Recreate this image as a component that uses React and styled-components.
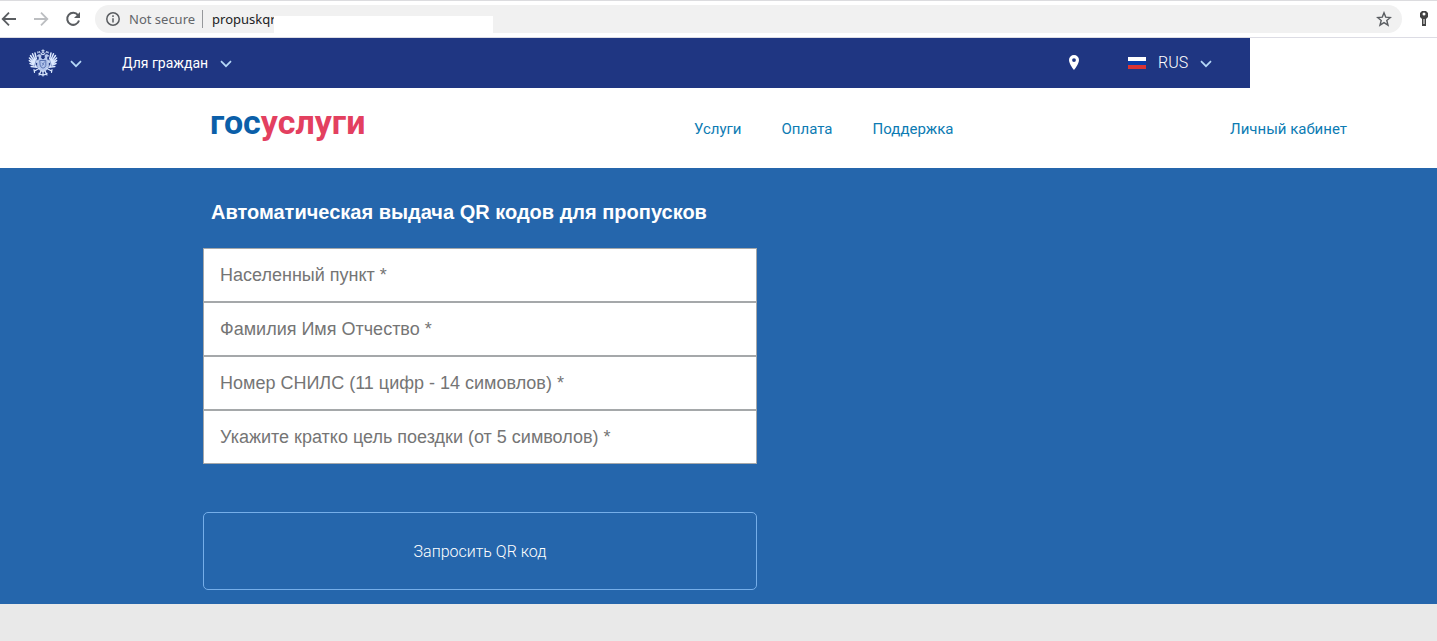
import React from "react";
import styled, { createGlobalStyle } from "styled-components";

const GlobalStyle = createGlobalStyle`
  *, *::before, *::after { box-sizing: border-box; }
  html { background: #e9e9e9; }
  body { margin: 0; font-family: "Liberation Sans", Arial, sans-serif; font-size: 16px; }
  a { color: inherit; text-decoration: none; }
  button, input { font: inherit; }
  button { margin: 0; padding: 0; border: 0; background: none; color: inherit; cursor: pointer; }
  svg { display: block; flex: none; }
`;

const BrowserBar = styled.div`
  display: flex;
  align-items: center;
  height: 38px;
  padding-right: 6px;
  border-top: 1px solid #dcdcdf;
  border-bottom: 1px solid #dcdce4;
  background: #fff;
`;

const BrowserButtons = styled.div`
  display: flex;
  gap: 14px;
  width: 95px;
`;

const IconButton = styled.button`
  display: flex;
  color: ${(p) => p.$color || "#5a5d61"};
`;

const Omnibox = styled.div`
  display: flex;
  flex: 1;
  align-items: center;
  height: 28px;
  padding: 0 10px 0 11px;
  border-radius: 14px;
  background: #f1f1f1;
  color: #63666a;
  font-family: "Noto Sans", sans-serif;
  font-size: 13px;
`;

const Security = styled.span`
  padding: 0 7px 0 9px;
`;

const Address = styled.input`
  width: 72px;
  height: 18px;
  padding: 0 0 0 9px;
  border: 0;
  border-left: 1px solid #96989b;
  outline: 0;
  background: none;
  color: #202124;
`;

const AddressMask = styled.span`
  align-self: flex-end;
  width: 219px;
  height: 17px;
  margin-right: auto;
  background: #fff;
`;

const KeyButton = styled(IconButton)`
  margin-left: 15px;
`;

const TopBar = styled.nav`
  display: flex;
  align-items: center;
  width: 87%;
  height: 50px;
  padding: 0 38px 0 28px;
  background: #1f3682;
  color: #fff;
`;

const TopItem = styled.button`
  display: flex;
  align-items: center;
  gap: 12px;
  margin-left: ${(p) => p.$before || 0};
  font: ${(p) => (p.$small ? "400 14px" : "300 16px")}/20px Roboto, sans-serif;
`;

const Page = styled.div`
  background: #fff;
`;

const Header = styled.header`
  display: flex;
  align-items: center;
  height: 80px;
  padding: 2px 90px 0 210px;
  color: #0c7bb3;
  font: 400 15px/20px Roboto, sans-serif;
`;

const Logo = styled.a`
  width: 484px;
  padding-bottom: 14px;
  color: #e3405f;
  font: 700 34px/40px Roboto, sans-serif;
`;

const LogoBlue = styled.span`
  color: #0b5fa9;
`;

const Menu = styled.nav`
  display: flex;
  gap: 40px;
  margin-right: auto;
`;

const Hero = styled.main`
  padding: 32px 0 14px 203px;
  background: #2566ac;
`;

const Title = styled.h1`
  margin: 0 0 24px;
  padding-left: 8px;
  color: #fff;
  font-size: 20px;
  line-height: 24px;
`;

const Form = styled.form`
  display: flex;
  flex-direction: column;
  width: 100%;
  max-width: 554px;
`;

const Field = styled.input`
  width: 100%;
  height: 54px;
  padding: 0 16px;
  border: 1px solid #a5a8aa;
  border-radius: 0;
  background: #fff;
  color: #333;
  font-size: 18px;
  &::placeholder { color: #757575; opacity: 1; }
`;

const Submit = styled.button`
  height: 78px;
  margin-top: 48px;
  padding-top: 2px;
  border: 1px solid #75aee9;
  border-radius: 5px;
  color: #fff;
  font: 300 16px/20px Roboto, sans-serif;
`;

const Chevron = () => (
  <svg width="12" height="10" viewBox="0 0 12 10" fill="none" stroke="#b5d7f7" strokeWidth="1.7">
    <path d="M1 3.200 6 8.200 11 3.200" />
  </svg>
);

const Eagle = () => (
  <svg width="30" height="28" viewBox="0 0 30 28" fill="none" stroke="#dce9ff" strokeLinecap="round" strokeLinejoin="round">
    <path d="M15 .8v2.400M13.800 1.800h2.400M13.300 4.300q1.700-1.600 3.400 0l-.5 1.300h-2.400zM9.800 4l.2-1.400.8.8.7-.9.500 1.400M18 3.900l.5-1.400.7.9.8-.8.2 1.400" strokeWidth="1" />
    <path d="M9 7q1.500-2.300 3.500-1.200 1.200 1 .2 2.500l1.300 2.200h2l1.300-2.200q-1-1.500.2-2.500Q19.500 4.700 21 7l-2 .6v2.900l1.500 1v5.500l-2 4L15 23l-3.500-2-2-4v-5.500l1.500-1V7.600z" fill="#b3c5ec" strokeWidth=".5" />
    <g strokeWidth="1.500">
      <path d="M9 13 7 4M8 13 4.500 4.800M7.500 14 2.500 6.500M7.200 15 1.400 9M7.500 16 1.300 11.700M8 17 2 14.500M9 18.300 3.200 17.500" />
      <path d="m21 13 2-9M22 13l3.500-8.200M22.500 14l5-7.500M22.800 15l5.800-6M22.500 16l6.200-4.300M22 17l6-2.500M21 18.300l5.800-.8" />
    </g>
    <path d="M11 19.500 6.500 22M6 20.500l.5 3M19 19.500l4.500 2.500M24 20.500l-.5 3M15 22v5M13 22l-2 4M17 22l2 4M11 24.500q4 3 8 0" strokeWidth="1.200" />
    <path d="M12.200 11.500h5.600v5q-.3 2-2.800 2.700-2.500-.7-2.800-2.700z" stroke="#4863a6" strokeWidth=".8" />
    <path d="m16.600 12.700-2.500 4M14 14l2 1.800M8.500 10.500 6.500 17M21.500 10.500l2 6.500" stroke="#4863a6" strokeWidth=".6" />
  </svg>
);

const fields = [
  ["city", "Населенный пункт *"],
  ["name", "Фамилия Имя Отчество *"],
  ["snils", "Номер СНИЛС (11 цифр - 14 симовлов) *"],
  ["purpose", "Укажите кратко цель поездки (от 5 символов) *"],
];

export default function App() {
  return (
    <>
      <GlobalStyle />
      <BrowserBar>
        <BrowserButtons>
          <IconButton aria-label="Back">
            <svg width="18" height="18" viewBox="0 0 18 18" fill="none" stroke="currentColor" strokeWidth="1.8"><path d="M16 9H3M9 2.700 2.700 9 9 15.300" /></svg>
          </IconButton>
          <IconButton aria-label="Forward" $color="#bcbec1">
            <svg width="18" height="18" viewBox="0 0 18 18" fill="none" stroke="currentColor" strokeWidth="1.8"><path d="M2 9h13M9 2.700 15.300 9 9 15.300" /></svg>
          </IconButton>
          <IconButton aria-label="Reload">
            <svg width="18" height="18" viewBox="0 0 18 18" fill="none" stroke="currentColor" strokeWidth="2"><path d="M14 5.200A6 6 0 1 0 15 10.500" /><path d="M16 2v6h-6z" fill="currentColor" stroke="none" /></svg>
          </IconButton>
        </BrowserButtons>
        <Omnibox>
          <svg width="14" height="14" viewBox="0 0 14 14" fill="none" stroke="#5a5d61" strokeWidth="1.5"><circle cx="7" cy="7" r="6.200" /><path d="M7 6.200v4.300M7 3.300v1.600" /></svg>
          <Security>Not secure</Security>
          <Address aria-label="Address" defaultValue="propuskqr" />
          <AddressMask />
          <IconButton aria-label="Bookmark">
            <svg width="16" height="16" viewBox="0 0 16 16" fill="none" stroke="currentColor" strokeWidth="1.400"><path d="m8 1.800 1.700 4.300 4.700.4-3.600 3 1.200 4.600L8 11.600l-4 2.500 1.200-4.600-3.600-3 4.700-.4z" /></svg>
          </IconButton>
        </Omnibox>
        <KeyButton aria-label="Passwords" $color="#424242">
          <svg width="14" height="16" viewBox="0 0 14 16" fill="currentColor" fillRule="evenodd"><path d="M5 0h4l2 2v4L9 8v7H7.500L5 15V8L3 6V2zM7 1.500a1.500 1.500 0 1 0 0 3 1.500 1.500 0 0 0 0-3M6.500 8v5h1V8z" /></svg>
        </KeyButton>
      </BrowserBar>
      <Page>
        <TopBar>
          <TopItem aria-label="Госуслуги"><Eagle /><Chevron /></TopItem>
          <TopItem $before="40px" $small>Для граждан<Chevron /></TopItem>
          <TopItem aria-label="Местоположение" $before="auto">
            <svg width="12" height="16" viewBox="0 0 12 16" fill="#fff" fillRule="evenodd"><path d="M6 0a5 5 0 0 0-5 5c0 4 5 10 5 10s5-6 5-10a5 5 0 0 0-5-5m0 3.200a1.900 1.900 0 1 1 0 3.800 1.900 1.900 0 0 1 0-3.800" /></svg>
          </TopItem>
          <TopItem $before="48px">
            <svg width="18" height="12" viewBox="0 0 18 12"><path fill="#fff" d="M0 0h18v4H0z" /><path fill="#073dab" d="M0 4h18v4H0z" /><path fill="#d93434" d="M0 8h18v4H0z" /></svg>
            RUS<Chevron />
          </TopItem>
        </TopBar>
        <Header>
          <Logo href="#"><LogoBlue>гос</LogoBlue>услуги</Logo>
          <Menu>
            <a href="#services">Услуги</a>
            <a href="#payment">Оплата</a>
            <a href="#support">Поддержка</a>
          </Menu>
          <a href="#account">Личный кабинет</a>
        </Header>
        <Hero>
          <Title>Автоматическая выдача QR кодов для пропусков</Title>
          <Form onSubmit={(e) => e.preventDefault()}>
            {fields.map(([id, text]) => (
              <Field key={id} name={id} aria-label={text} placeholder={text} />
            ))}
            <Submit type="submit">Запросить QR код</Submit>
          </Form>
        </Hero>
      </Page>
    </>
  );
}
